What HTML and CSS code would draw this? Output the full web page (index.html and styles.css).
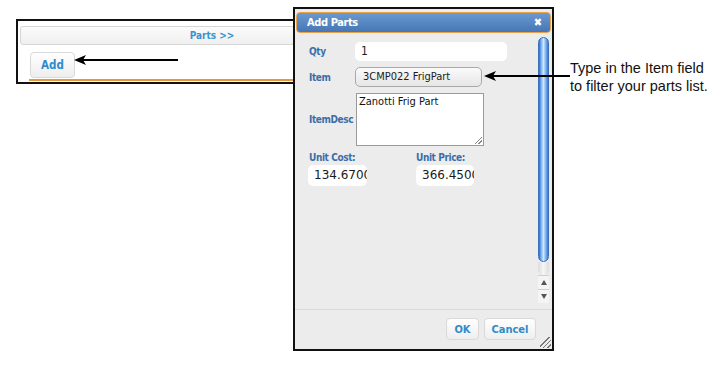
FILE: index.html
```html
<!DOCTYPE html>
<html>
<head>
<meta charset="utf-8">
<link rel="stylesheet" href="styles.css">
</head>
<body>
<div class="page">
  <div class="shot">
    <div class="parts-bar">Parts &gt;&gt;</div>
    <div class="shot-row"><button class="btn add-btn">Add</button></div>
    <div class="orange-line"></div>
  </div>

  <div class="dialog">
    <div class="dlg-head">
      <span class="dlg-title">Add Parts</span>
      <span class="dlg-close">&#x2716;</span>
    </div>
    <div class="dlg-body">
      <div class="dlg-content">
        <div class="row row-qty">
          <span class="lbl">Qty</span>
          <div class="field qty-field">1</div>
        </div>
        <div class="row row-item">
          <span class="lbl">Item</span>
          <div class="field select-field">3CMP022 FrigPart</div>
        </div>
        <div class="row row-desc">
          <span class="lbl">ItemDesc</span>
          <div class="textarea">Zanotti Frig Part<span class="grip"></span></div>
        </div>
        <div class="units">
          <div class="unit unit-cost">
            <span class="lbl">Unit Cost:</span>
            <div class="field num-field">134.6700</div>
          </div>
          <div class="unit unit-price">
            <span class="lbl">Unit Price:</span>
            <div class="field num-field">366.4500</div>
          </div>
        </div>
      </div>
      <div class="scrollbar">
        <div class="thumb"></div>
        <div class="track-rest"></div>
        <div class="arrow-btn"><span class="tri up"></span></div>
        <div class="arrow-btn"><span class="tri down"></span></div>
      </div>
    </div>
    <div class="dlg-foot">
      <button class="btn ok-btn">OK</button>
      <button class="btn cancel-btn">Cancel</button>
      <span class="resize-grip"></span>
    </div>
  </div>

  <svg class="arrow arrow-left" width="110" height="12" viewBox="0 0 110 12">
    <line x1="6" y1="6" x2="104" y2="6" stroke="#000" stroke-width="2"/>
    <polygon points="0,6 12,1 9,6 12,11" fill="#000"/>
  </svg>
  <svg class="arrow arrow-right" width="90" height="12" viewBox="0 0 90 12">
    <line x1="6" y1="6" x2="86" y2="6" stroke="#000" stroke-width="2"/>
    <polygon points="0,6 12,1 9,6 12,11" fill="#000"/>
  </svg>

  <div class="note">Type in the Item field<br>to filter your parts list.</div>
</div>
</body>
</html>
```

FILE: styles.css
```css
* { box-sizing: border-box; }
html, body { margin: 0; padding: 0; background: #fff; }
.page {
  position: relative;
  width: 727px;
  height: 385px;
  overflow: hidden;
  font-family: "DejaVu Sans Condensed", "DejaVu Sans", sans-serif;
}

/* background screenshot */
.shot {
  position: absolute;
  left: 16px;
  top: 19px;
  width: 400px;
  height: 65px;
  border: 2px solid #111;
  background: #fff;
  padding: 5px 0 0 2px;
}
.parts-bar {
  width: 384px;
  height: 19px;
  border: 1px solid #d6d6d6;
  border-radius: 3px;
  background: linear-gradient(#fbfbfb, #efefef);
  color: #3a93cf;
  font-weight: bold;
  font-size: 10px;
  line-height: 17px;
  text-align: center;
}
.shot-row { padding: 7px 0 0 10px; height: 34px; }
.btn {
  font-family: "DejaVu Sans Condensed", "DejaVu Sans", sans-serif;
  font-weight: bold;
  font-size: 11px;
  color: #2f8bcc;
  border: 1px solid #d9d9d9;
  border-radius: 4px;
  background: linear-gradient(#ffffff, #eeeeee);
  padding: 0;
  margin: 0;
}
.add-btn { width: 45px; height: 26px; font-size: 11.5px; }
.orange-line {
  margin-left: 9px;
  height: 2px;
  background: #e4983a;
}

/* dialog */
.dialog {
  position: absolute;
  left: 293px;
  top: 7px;
  width: 261px;
  height: 344px;
  border: 2px solid #111;
  background: #ececec;
  display: flex;
  flex-direction: column;
}
.dlg-head {
  margin: 3px 1px 0 1px;
  height: 21px;
  border: 1px solid #e7a24a;
  border-radius: 4px;
  background: linear-gradient(#6a9ad0, #4676b4);
  display: flex;
  align-items: center;
  justify-content: space-between;
  padding: 0 8px 0 10px;
  color: #fff;
  font-weight: bold;
}
.dlg-title { font-size: 11px; letter-spacing: -0.4px; }
.dlg-close { font-size: 11px; }

.dlg-body {
  display: flex;
  padding-top: 4px;
  height: 270px;
}
.dlg-content {
  flex: 1;
  padding: 5px 0 0 14px;
}
.lbl {
  color: #3c6ea8;
  font-weight: bold;
  font-size: 10px;
  letter-spacing: -0.4px;
}
.row { display: flex; align-items: center; }
.row .lbl { width: 46px; flex: none; }
.field {
  background: #fff;
  border-radius: 5px;
  font-family: "DejaVu Sans Condensed", "DejaVu Sans", sans-serif;
  font-size: 12px;
  color: #1c1c1c;
  white-space: nowrap;
  overflow: hidden;
}
.qty-field { width: 152px; height: 19px; line-height: 19px; padding-left: 6px; }
.row-item { margin-top: 6px; }
.select-field {
  width: 127px;
  height: 20px;
  line-height: 18px;
  padding-left: 7px;
  border: 1px solid #a9a9a9;
  background: linear-gradient(#fafafa, #e6e6e6);
  font-size: 11px;
}
.row-desc { margin-top: 6px; }
.textarea {
  position: relative;
  margin-left: 1px;
  width: 128px;
  height: 53px;
  background: #fff;
  border: 1px solid #9a9a9a;
  font-size: 11px;
  padding: 1px 2px;
  color: #111;
}
.grip {
  position: absolute;
  right: 1px;
  bottom: 1px;
  width: 7px;
  height: 7px;
  background: linear-gradient(135deg, transparent 45%, #888 45%, #888 55%, transparent 55%, transparent 70%, #888 70%, #888 80%, transparent 80%);
}
.units { display: flex; margin-top: 5px; }
.unit { display: flex; flex-direction: column; }
.unit-cost { width: 107px; }
.unit .lbl { height: 13px; line-height: 13px; }
.num-field {
  margin-top: 1px;
  height: 21px;
  line-height: 21px;
  padding-left: 6px;
  font-family: "DejaVu Sans", sans-serif;
  font-size: 12px;
  color: #1a1a1a;
}
.unit-cost .num-field { width: 59px; margin-left: -1px; }
.unit-price .num-field { width: 58px; }

.scrollbar {
  width: 11px;
  margin-right: 3px;
  height: 266px;
  display: flex;
  flex-direction: column;
}
.thumb {
  height: 225px;
  border-radius: 6px;
  border: 1px solid #3b6fb8;
  background: linear-gradient(90deg, #2f6bd0, #8fc0f6 30%, #cfe6ff 50%, #7fb2ee 75%, #3a78d2);
}
.track-rest {
  height: 13px;
  background: linear-gradient(90deg, #dcdcdc, #f6f6f6, #dcdcdc);
  border-radius: 0 0 6px 6px;
}
.arrow-btn {
  height: 14px;
  border-top: 1px solid #cfcfcf;
  background: #f4f4f4;
  display: flex;
  align-items: center;
  justify-content: center;
}
.tri { width: 0; height: 0; border-left: 3px solid transparent; border-right: 3px solid transparent; }
.tri.up { border-bottom: 5px solid #555; }
.tri.down { border-top: 5px solid #555; }

.dlg-foot {
  position: relative;
  margin-top: 6px;
  border-top: 1px solid #dadada;
  flex: 1;
  display: flex;
  justify-content: flex-end;
  align-items: flex-start;
  gap: 5px;
  padding: 8px 16px 0 0;
}
.ok-btn { width: 33px; height: 22px; }
.cancel-btn { width: 52px; height: 22px; }
.resize-grip {
  position: absolute;
  right: 1px;
  bottom: 1px;
  width: 11px;
  height: 11px;
  background: linear-gradient(135deg, transparent 40%, #777 40%, #777 47%, transparent 47%, transparent 60%, #777 60%, #777 67%, transparent 67%, transparent 80%, #777 80%, #777 87%, transparent 87%);
}

/* annotations */
.arrow { position: absolute; }
.arrow-left { left: 74px; top: 54px; }
.arrow-right { left: 484px; top: 70px; }
.note {
  position: absolute;
  left: 570px;
  top: 59px;
  font-family: "Liberation Sans", Arial, sans-serif;
  font-size: 14.5px;
  line-height: 18px;
  color: #111;
}
```
